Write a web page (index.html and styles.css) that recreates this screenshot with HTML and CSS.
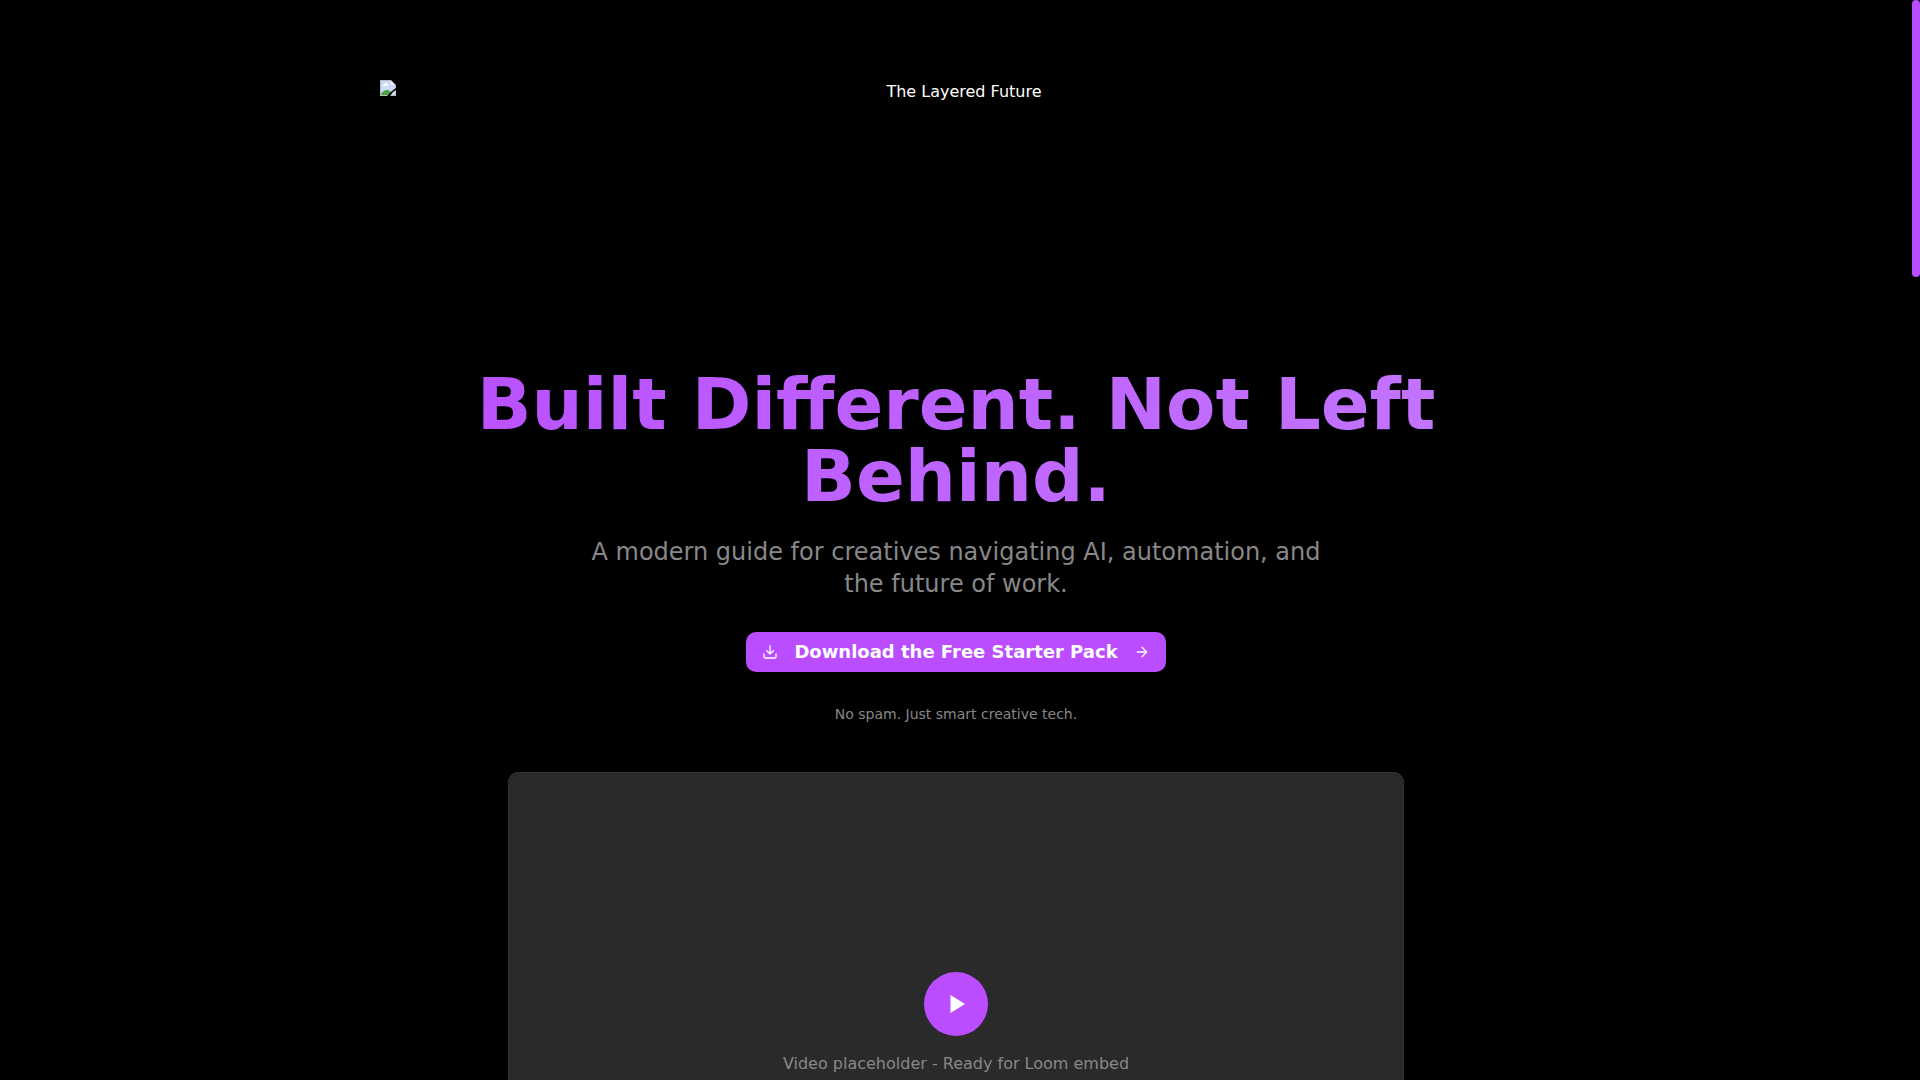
FILE: index.html
```html
<!DOCTYPE html>
<html lang="en">
<head>
<meta charset="utf-8">
<meta name="viewport" content="width=device-width, initial-scale=1">
<title>The Layered Future</title>
<link rel="stylesheet" href="styles.css">
</head>
<body>
<div class="viewport">
  <main class="page">
    <section class="hero">
      <div class="banner">
        <svg class="banner-icon" viewBox="0 0 16 16" aria-hidden="true">
          <path d="M0 0H11L16 5V16H0Z" fill="#b9bcc2"/>
          <path d="M1 1H11V5H15V15H1Z" fill="#cddafa"/>
          <path d="M11 1L15 5H11Z" fill="#f4f5f7"/>
          <path d="M3 6V5L4 4L5 3L7 3L8 5V6Z" fill="#fff"/>
          <path d="M1 15V14C3 11 5 10 7 10C9 10 10 11 11 12L9 15Z" fill="#4ba33b"/>
          <path d="M7 16L10 13L12 11L16 8V10L13 12L10 16Z" fill="#000"/>
        </svg>
        <span class="banner-text">The Layered Future</span>
      </div>
      <h1 class="title">Built Different. Not Left Behind.</h1>
      <p class="subtitle">A modern guide for creatives navigating AI, automation, and the future of work.</p>
      <button class="cta" type="button">
        <svg class="icon" viewBox="0 0 24 24" aria-hidden="true"><path d="M21 15v4a2 2 0 0 1-2 2H5a2 2 0 0 1-2-2v-4M7 10l5 5 5-5M12 15V3"/></svg>
        <span>Download the Free Starter Pack</span>
        <svg class="icon" viewBox="0 0 24 24" aria-hidden="true"><path d="M5 12h14M12 5l7 7-7 7"/></svg>
      </button>
      <p class="note">No spam. Just smart creative tech.</p>
      <div class="video">
        <button class="play" type="button" aria-label="Play video">
          <svg class="play-icon" viewBox="0 0 24 24" aria-hidden="true"><path d="M6.500 3L21 12L6.500 21Z"/></svg>
        </button>
        <p class="caption">Video placeholder - Ready for Loom embed</p>
      </div>
    </section>
  </main>
  <div class="scroll-track"><div class="scroll-thumb"></div></div>
</div>
</body>
</html>
```
FILE: styles.css
```css
*, *::before, *::after {
  box-sizing: border-box;
}

body {
  margin: 0;
  background: #000;
  color: #fff;
  font-family: "DejaVu Sans", sans-serif;
  font-size: 16px;
  line-height: 24px;
}

h1, p {
  margin: 0;
}

button {
  border: 0;
  padding: 0;
  font: inherit;
  color: inherit;
  cursor: pointer;
}

.viewport {
  display: flex;
  height: 100vh;
  overflow: hidden;
}

.page {
  flex: 1;
  min-width: 0;
  padding: 80px 24px;
}

.scroll-track {
  width: 8px;
  background: #000;
}

.scroll-thumb {
  height: 277px;
  border-radius: 4px;
  background: #b94dff;
}

.hero {
  display: flex;
  flex-direction: column;
  align-items: center;
  max-width: 1152px;
  margin: 0 auto;
  text-align: center;
}

.banner {
  display: flex;
  align-self: stretch;
  height: 256px;
  margin-bottom: 32px;
}

.banner-icon {
  width: 16px;
  height: 16px;
}

.banner-text {
  flex: 1;
}

.title {
  width: 100%;
  margin-bottom: 24px;
  font-size: 72px;
  font-weight: 700;
  line-height: 72px;
  color: transparent;
  background: linear-gradient(135deg, #b94dff, #c47aff);
  -webkit-background-clip: text;
  background-clip: text;
}

.subtitle {
  max-width: 768px;
  margin-bottom: 32px;
  font-size: 24px;
  line-height: 32px;
  color: #888;
}

.cta {
  display: flex;
  align-items: center;
  gap: 16px;
  height: 40px;
  margin-bottom: 32px;
  padding: 0 16px;
  border-radius: 10px;
  background: #b94dff;
  font-size: 18px;
  font-weight: 700;
  line-height: 28px;
}

.icon {
  width: 16px;
  height: 16px;
  fill: none;
  stroke: currentColor;
  stroke-width: 2;
  stroke-linecap: round;
  stroke-linejoin: round;
}

.note {
  margin-bottom: 48px;
  font-size: 14px;
  line-height: 20px;
  color: #888;
}

.video {
  display: flex;
  flex-direction: column;
  align-items: center;
  justify-content: center;
  gap: 16px;
  width: 100%;
  max-width: 896px;
  aspect-ratio: 16 / 9;
  border: 1px solid #333;
  border-radius: 10px;
  background: #2a2a2a;
}

.play {
  display: flex;
  align-items: center;
  justify-content: center;
  width: 64px;
  height: 64px;
  border-radius: 50%;
  background: #b94dff;
}

.play-icon {
  width: 24px;
  height: 24px;
  fill: #fff;
}

.caption {
  color: #888;
}
```
